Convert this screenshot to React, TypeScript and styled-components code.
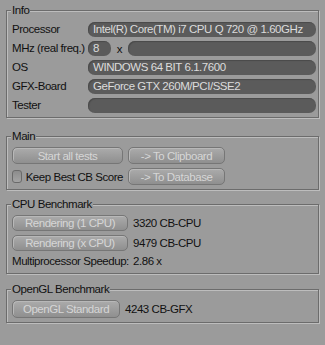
import React from 'react'
import { createGlobalStyle, styled } from 'styled-components'

const GlobalStyles = createGlobalStyle`
  html, body {
    margin: 0;
    padding: 0;
    background: #9b9b9b;
  }
  body {
    font-family: "Liberation Sans", Arial, sans-serif;
    font-size: 11.5px;
    letter-spacing: -0.45px;
    color: #111;
  }
`

const Window = styled.div`
  width: 325px;
  height: 345px;
  box-sizing: border-box;
  padding: 10px 0 0 6px;
  display: flex;
  flex-direction: column;
`

const Group = styled.div<{ $gap: number }>`
  width: 313px;
  box-sizing: border-box;
  margin-top: ${(p) => p.$gap}px;
  border: 1px solid #6c6c6c;
  box-shadow: 1px 1px 0 #bdbdbd, inset 1px 1px 0 #bdbdbd;
  padding: 0 2px 4px 5px;
`

const Title = styled.div`
  width: fit-content;
  margin: -7px 0 0 -1px;
  padding: 0 1px;
  height: 13px;
  line-height: 13px;
  background: #9b9b9b;
`

const Rows = styled.div`
  display: flex;
  flex-direction: column;
  gap: 4px;
  padding-top: 5px;
`

const Row = styled.div`
  display: grid;
  grid-template-columns: 76px 1fr;
  align-items: center;
  height: 15px;
`

const Label = styled.span`
  white-space: nowrap;
  line-height: 15px;
`

const Field = styled.div<{ $w?: number }>`
  height: 15px;
  line-height: 15px;
  ${(p) => (p.$w ? `width: ${p.$w}px;` : 'flex: 1;')}
  box-sizing: border-box;
  border-radius: 7px;
  background: #5b5b5b;
  box-shadow: inset 1px 1px 1px #4a4a4a;
  color: #dcdcdc;
  padding-left: 5px;
  white-space: nowrap;
  overflow: hidden;
`

const Inline = styled.div`
  display: flex;
  align-items: center;
`

const Times = styled.span`
  width: 17px;
  text-align: center;
`

const ButtonGrid = styled.div<{ $cols: string }>`
  display: grid;
  grid-template-columns: ${(p) => p.$cols};
  column-gap: 5px;
  row-gap: 4px;
  align-items: center;
  padding-top: 4px;
`

const Button = styled.div<{ $h?: number }>`
  height: ${(p) => p.$h ?? 17}px;
  box-sizing: border-box;
  border: 1px solid #767676;
  border-radius: 5px;
  background: linear-gradient(#ababab, #8f8f8f);
  box-shadow: inset 1px 1px 0 #b8b8b8;
  color: #d6d6d6;
  display: flex;
  align-items: center;
  justify-content: center;
  white-space: nowrap;
`

const Check = styled.label`
  display: flex;
  align-items: center;
  gap: 4px;
  white-space: nowrap;
`

const Box = styled.span`
  width: 11px;
  height: 11px;
  border: 1px solid #6a6a6a;
  border-radius: 3px;
  background: linear-gradient(#8c8c8c, #a4a4a4);
`

const Result = styled.span`
  white-space: nowrap;
`

const Speedup = styled.div`
  display: grid;
  grid-template-columns: 121px 1fr;
  height: 16px;
  line-height: 16px;
  padding-top: 2px;
`

export default function App() {
  return (
    <>
      <GlobalStyles />
      <Window>
        <Group $gap={0}>
          <Title>Info</Title>
          <Rows>
            <Row>
              <Label>Processor</Label>
              <Field>Intel(R) Core(TM) i7 CPU Q 720 @ 1.60GHz</Field>
            </Row>
            <Row>
              <Label>MHz (real freq.)</Label>
              <Inline>
                <Field $w={23}>8</Field>
                <Times>x</Times>
                <Field />
              </Inline>
            </Row>
            <Row>
              <Label>OS</Label>
              <Field>WINDOWS 64 BIT 6.1.7600</Field>
            </Row>
            <Row>
              <Label>GFX-Board</Label>
              <Field>GeForce GTX 260M/PCI/SSE2</Field>
            </Row>
            <Row>
              <Label>Tester</Label>
              <Field />
            </Row>
          </Rows>
        </Group>

        <Group $gap={18}>
          <Title>Main</Title>
          <ButtonGrid $cols="111px 97px">
            <Button>Start all tests</Button>
            <Button>-&gt; To Clipboard</Button>
            <Check>
              <Box />
              Keep Best CB Score
            </Check>
            <Button>-&gt; To Database</Button>
          </ButtonGrid>
        </Group>

        <Group $gap={14}>
          <Title>CPU Benchmark</Title>
          <ButtonGrid $cols="116px 1fr">
            <Button $h={16}>Rendering (1 CPU)</Button>
            <Result>3320 CB-CPU</Result>
            <Button $h={16}>Rendering (x CPU)</Button>
            <Result>9479 CB-CPU</Result>
          </ButtonGrid>
          <Speedup>
            <span>Multiprocessor Speedup:</span>
            <span>2.86 x</span>
          </Speedup>
        </Group>

        <Group $gap={15}>
          <Title>OpenGL Benchmark</Title>
          <ButtonGrid $cols="108px 1fr">
            <Button $h={18}>OpenGL Standard</Button>
            <Result>4243 CB-GFX</Result>
          </ButtonGrid>
        </Group>
      </Window>
    </>
  )
}
